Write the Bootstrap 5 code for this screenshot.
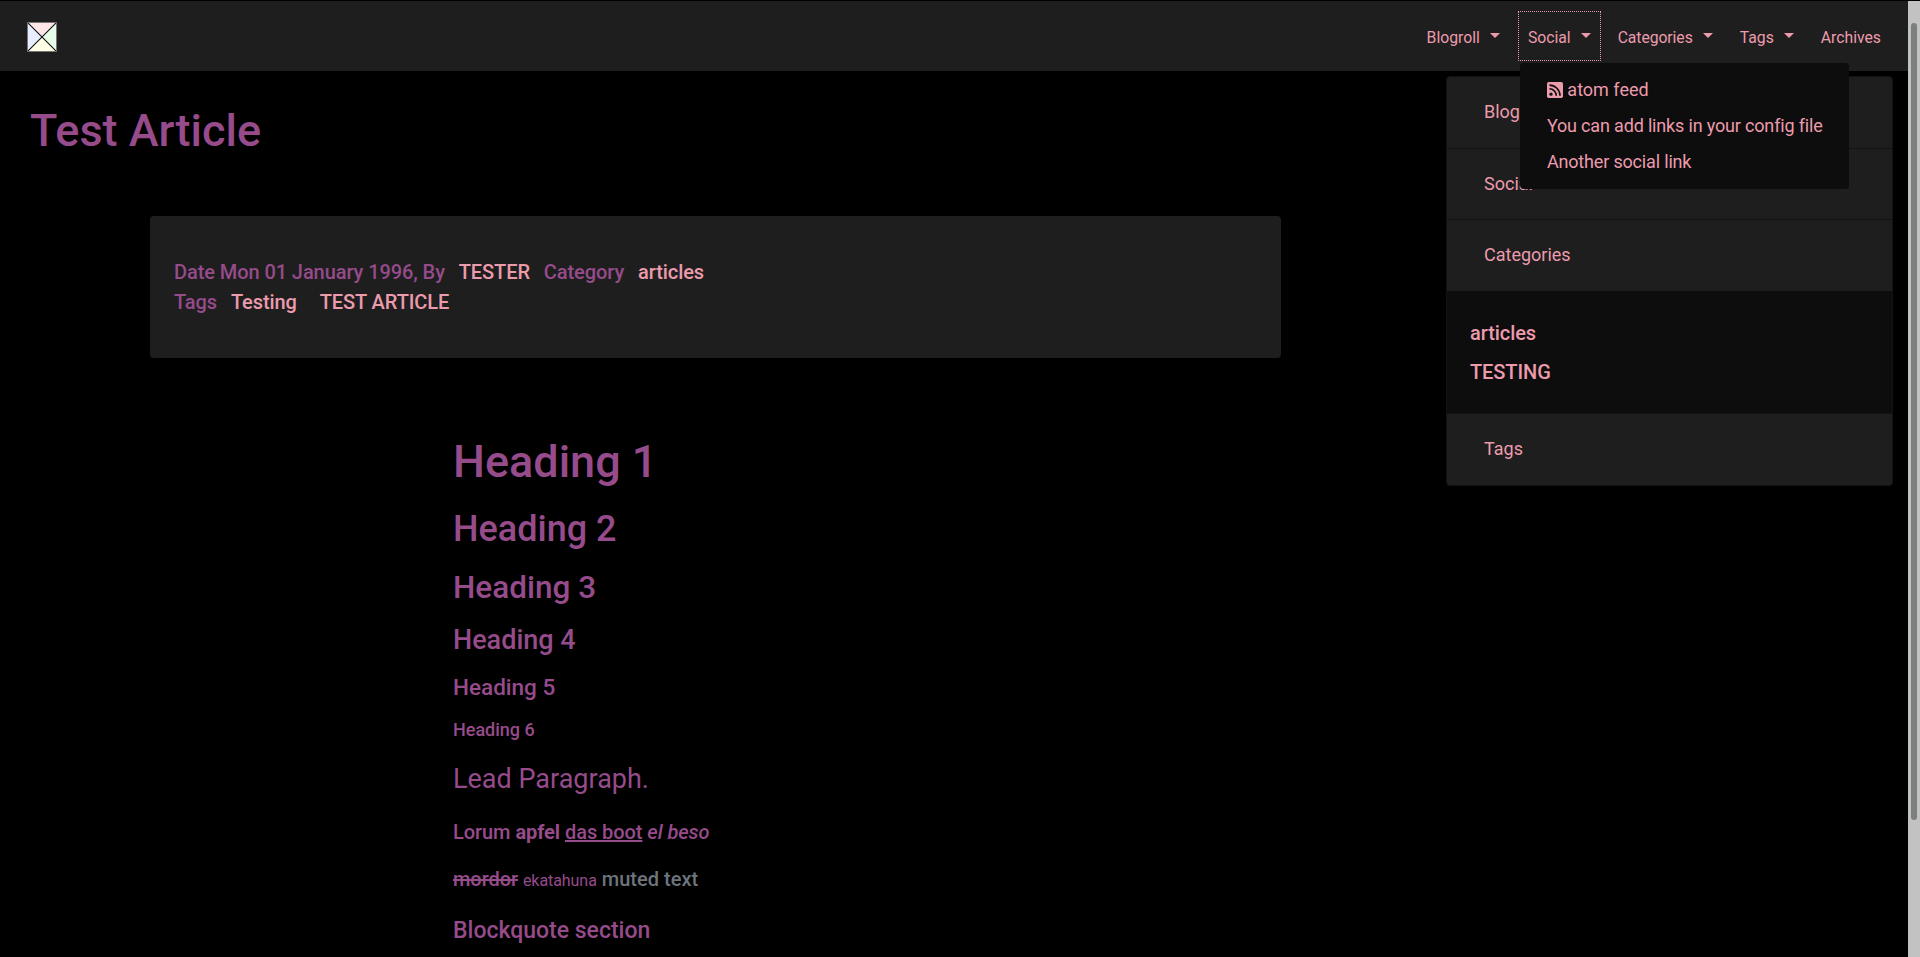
<!DOCTYPE html>
<html lang="en" data-bs-theme="dark">
<head>
<meta charset="utf-8">
<meta name="viewport" content="width=device-width, initial-scale=1">
<title>Test Article</title>
<link href="https://cdn.jsdelivr.net/npm/bootstrap@5.3.0/dist/css/bootstrap.min.css" rel="stylesheet">
<style>
:root{--pink:#ec9bad;--plum:#964b8b;--panel:#1e1e1e;--deep:#0d0d0d}
html{font-size:18px}
body{font-family:Roboto,"Liberation Sans",sans-serif;background:#000;color:var(--plum);height:957px;overflow:hidden}
a{color:var(--pink);text-decoration:none}
.viewport{height:957px;overflow:hidden;padding-top:1px}
.page{min-width:0}
.topbar{height:70px;background:var(--panel);padding:0 18px 0 27px}
.topbar .logo{padding-top:2px}
.topbar .nav{column-gap:9px}
.topbar .nav-item:first-child{margin-right:1px}
.topbar .nav-link{color:var(--pink);font-size:15.75px;line-height:24px;padding:14px 9px 10px;--bs-nav-link-color:var(--pink)}
.topbar .nav-link.wide{letter-spacing:-.08px}
.topbar .nav-link.show{outline:1px dotted var(--pink)}
.topbar .dropdown-toggle::after{margin-left:10px;vertical-align:5px;border-top-width:5px;border-right-width:5px;border-left-width:5px}
.topbar .dropdown-menu{background:var(--deep);border:0;border-radius:4px;padding:9px 0;top:51px;left:1px;font-size:18px;width:329px}
.topbar .dropdown-item{color:var(--pink);padding:4px 27px;line-height:28px}
.topbar .dropdown-item+.dropdown-item{letter-spacing:-.17px}
.topbar .dropdown-item svg{vertical-align:-2px}
.title{font-size:45px;margin:33px 0 0 30px}
h1,h2,h3,h4,h5,h6{margin-bottom:18px;color:var(--plum)}
h1{font-size:45px}h2{font-size:36px}h3{font-size:31.5px}h4{font-size:27px}h5{font-size:22.5px}h6{font-size:18px}
.info{background:var(--panel);border-radius:4px;margin:58px 0 0 150px;width:1131px;height:142px;padding:41px 24px;font-size:20px;line-height:30px;font-weight:500;letter-spacing:-.08px}
.info a{margin:0 9px}
.article{margin:77px 0 0 453px;font-size:20px;font-weight:500}
.article h1{margin-bottom:19px}
.article h3{margin-bottom:17px}
.article p{line-height:30px;margin-bottom:17px;letter-spacing:-.06px}
.article .lead{font-size:27px;font-weight:400;line-height:40.5px;margin-bottom:18px;letter-spacing:0}
.article .tiny{font-size:16px;font-weight:400}
.article .faint{color:#6c757d;letter-spacing:.03px}
.article .quote-title{font-size:23px;margin-top:21px}
.side{width:447px;margin:5px 15px 0 0}
.side .accordion-item{background:var(--panel);border:1px solid #121212;border-top-width:0;color:var(--pink);border-radius:0}
.side .accordion-item:first-child{border-top-width:1px;border-radius:4px 4px 0 0}
.side .accordion-item:last-child{border-radius:0 0 4px 4px}
.side .head{height:70.6px;padding:0 37px 1px;font-size:18px}
.side .open{background:var(--deep);height:122.4px;padding:23px;font-size:20px;font-weight:500;line-height:39px;letter-spacing:-.08px}
.track{width:12px;background:#c1c2c1;padding:22px 3px 0}
.thumb{width:6px;height:797px;border-radius:3px;background:#7b7f80}
</style>
</head>
<body>
<div class="viewport d-flex">
  <div class="page flex-grow-1">
    <nav class="topbar d-flex align-items-center justify-content-between">
      <a class="logo" href="#"><svg class="d-block" width="30" height="30" viewBox="0 0 30 30"><path fill="#ffe6e6" d="M0 0h30L15 15z"/><path fill="#e6ffe6" d="M30 0v30L15 15z"/><path fill="#ffffe6" d="M0 30h30L15 15z"/><path fill="#e6eeff" d="M0 0v30l15-15z"/><path d="M0 0l30 30M30 0L0 30" stroke="#111" stroke-width="1.1"/><path d="M.5.5h29v29H.5z" fill="none" stroke="#777"/></svg></a>
      <ul class="nav flex-nowrap">
        <li class="nav-item"><a class="nav-link dropdown-toggle" href="#">Blogroll</a></li>
        <li class="nav-item dropdown"><a class="nav-link dropdown-toggle show" href="#">Social</a>
          <div class="dropdown-menu show">
            <a class="dropdown-item" href="#"><svg width="16" height="16" viewBox="0 0 16 16"><rect width="16" height="16" rx="1.7" fill="#ec9bad"/><g fill="none" stroke="#0d0d0d" stroke-width="1.6"><path d="M2.4 3.1A10.6 10.6 0 0 1 13 13.7M2.4 6.8A6.9 6.9 0 0 1 9.3 13.7"/></g><circle cx="4" cy="12.2" r="1.6" fill="#0d0d0d"/></svg> atom feed</a>
            <a class="dropdown-item" href="#">You can add links in your config file</a>
            <a class="dropdown-item" href="#">Another social link</a>
          </div></li>
        <li class="nav-item"><a class="nav-link wide dropdown-toggle" href="#">Categories</a></li>
        <li class="nav-item"><a class="nav-link dropdown-toggle" href="#">Tags</a></li>
        <li class="nav-item"><a class="nav-link" href="#">Archives</a></li>
      </ul>
    </nav>
    <div class="d-flex justify-content-between align-items-start">
      <main>
        <h1 class="title">Test Article</h1>
        <section class="info">Date Mon 01 January 1996, By <a href="#">TESTER</a> Category <a href="#">articles</a><br>Tags <a href="#">Testing</a> <a href="#">TEST ARTICLE</a></section>
        <article class="article">
          <h1>Heading 1</h1>
          <h2>Heading 2</h2>
          <h3>Heading 3</h3>
          <h4>Heading 4</h4>
          <h5>Heading 5</h5>
          <h6>Heading 6</h6>
          <p class="lead">Lead Paragraph.</p>
          <p>Lorum <strong>apfel</strong> <u>das boot</u> <em>el beso</em></p>
          <p><s>mordor</s> <span class="tiny">ekatahuna</span> <span class="faint">muted text</span></p>
          <h5 class="quote-title">Blockquote section</h5>
        </article>
      </main>
      <aside class="side accordion">
        <div class="accordion-item"><div class="head d-flex align-items-center">Blogroll</div></div>
        <div class="accordion-item"><div class="head d-flex align-items-center">Social</div></div>
        <div class="accordion-item"><div class="head d-flex align-items-center">Categories</div><div class="open"><div>articles</div><div>TESTING</div></div></div>
        <div class="accordion-item"><div class="head d-flex align-items-center">Tags</div></div>
      </aside>
    </div>
  </div>
  <div class="track"><div class="thumb"></div></div>
</div>
<script src="https://cdn.jsdelivr.net/npm/bootstrap@5.3.0/dist/js/bootstrap.bundle.min.js"></script>
</body>
</html>
